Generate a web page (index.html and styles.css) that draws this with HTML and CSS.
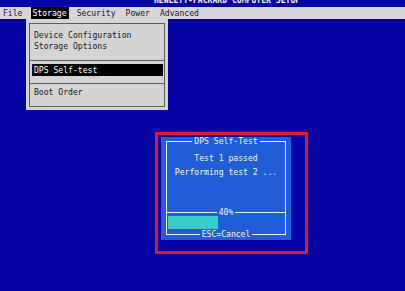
FILE: index.html
```html
<!DOCTYPE html>
<html lang="en">
<head>
  <meta charset="UTF-8">
  <title>Computer Setup</title>
  <link rel="stylesheet" href="styles.css">
</head>
<body>
  <div class="title"><span>HEWLETT-PACKARD COMPUTER SETUP</span></div>

  <!-- menu bar -->
  <div class="menubar">
    <span class="menu-item">File</span>
    <span class="menu-item active">Storage</span>
    <span class="menu-item">Security</span>
    <span class="menu-item">Power</span>
    <span class="menu-item">Advanced</span>
  </div>

  <!-- Storage dropdown -->
  <div class="dropdown">
    <div class="dropdown-frame">
      <div class="group group-first">
        <div class="entry">Device Configuration</div>
        <div class="entry">Storage Options</div>
      </div>
      <div class="group group-mid">
        <div class="entry selected">DPS Self-test</div>
      </div>
      <div class="group group-last">
        <div class="entry">Boot Order</div>
      </div>
    </div>
  </div>

  <!-- self test dialog -->
  <div class="highlight">
    <div class="dialog">
      <div class="rule rule-top"><span>DPS Self-Test</span></div>
      <div class="frame">
        <div class="message">
          <div>Test 1 passed</div>
          <div>Performing test 2 ...</div>
        </div>
        <div class="rule rule-mid"><span>40%</span></div>
        <div class="progress"><div class="progress-fill" style="width: 50px"></div></div>
      </div>
      <div class="rule rule-bottom"><span>ESC=Cancel</span></div>
    </div>
  </div>
</body>
</html>
```

FILE: styles.css
```css
/* base */
body {
  margin: 0;
  width: 405px;
  height: 291px;
  overflow: hidden;
  position: relative;
  background: #0505a5;
  font-family: "DejaVu Sans Mono", "Liberation Mono", monospace;
  font-size: 8.1px;
  color: #1a1a1a;
}

.title {
  height: 7px;
  overflow: hidden;
  padding-left: 154px;
  color: #f4f4ff;
  font-weight: bold;
}

.title span {
  display: block;
  margin-top: -4px;
  line-height: 9px;
}

/* menu bar */
.menubar {
  height: 12px;
  line-height: 12px;
  background: #d6d6d6;
  display: flex;
  gap: 6px;
  padding-left: 1px;
}

.menu-item {
  padding: 0 2px;
}

.menu-item.active {
  background: #000;
  color: #fff;
}

/* dropdown */
.dropdown {
  position: absolute;
  left: 26px;
  top: 19px;
  width: 136px;
  padding: 4px 3px 3px 3px;
  background: #d4d4d4;
}

.dropdown-frame {
  border: 1px solid #5c5c5c;
}

.group {
  line-height: 11px;
}

.group-first {
  padding: 6px 4px 8px 4px;
  border-bottom: 1px solid #5c5c5c;
}

.group-mid {
  padding: 3px 1px 7px 2px;
  border-bottom: 1px solid #5c5c5c;
}

.group-last {
  padding: 3px 4px 8px 4px;
}

.entry.selected {
  background: #000;
  color: #fff;
  line-height: 12px;
  padding-left: 2px;
}

/* dialog */
.highlight {
  width: 140px;
  margin: 113px 0 0 155px;
  padding: 2px 4px 11px 3px;
  border: 3px solid #e3162b;
}

.dialog {
  width: 120px;
  background: #1f5ed6;
  padding: 4px 5px 5px 5px;
  color: #f2f4ff;
}

.frame {
  border-left: 1px solid #e8ecff;
  border-right: 1px solid #e8ecff;
}

.rule {
  display: flex;
  align-items: center;
  height: 9px;
  line-height: 9px;
}

.rule::before,
.rule::after {
  content: "";
  flex: 1;
  height: 1px;
  background: #e8ecff;
}

.rule span {
  padding: 0 2px;
}

.rule-top {
  margin-top: -4px;
  margin-bottom: -4px;
}

.rule-bottom {
  margin-top: -4px;
  margin-bottom: -4px;
}

.rule-mid {
  height: 8px;
  margin-left: -1px;
  margin-right: -1px;
}

.message {
  padding-top: 9px;
  height: 33px;
  margin-bottom: 24px;
  line-height: 14px;
  text-align: center;
}

.progress {
  height: 13px;
  padding-left: 1px;
  padding-bottom: 5px;
}

.progress-fill {
  height: 13px;
  background: #3ccaca;
}
```
